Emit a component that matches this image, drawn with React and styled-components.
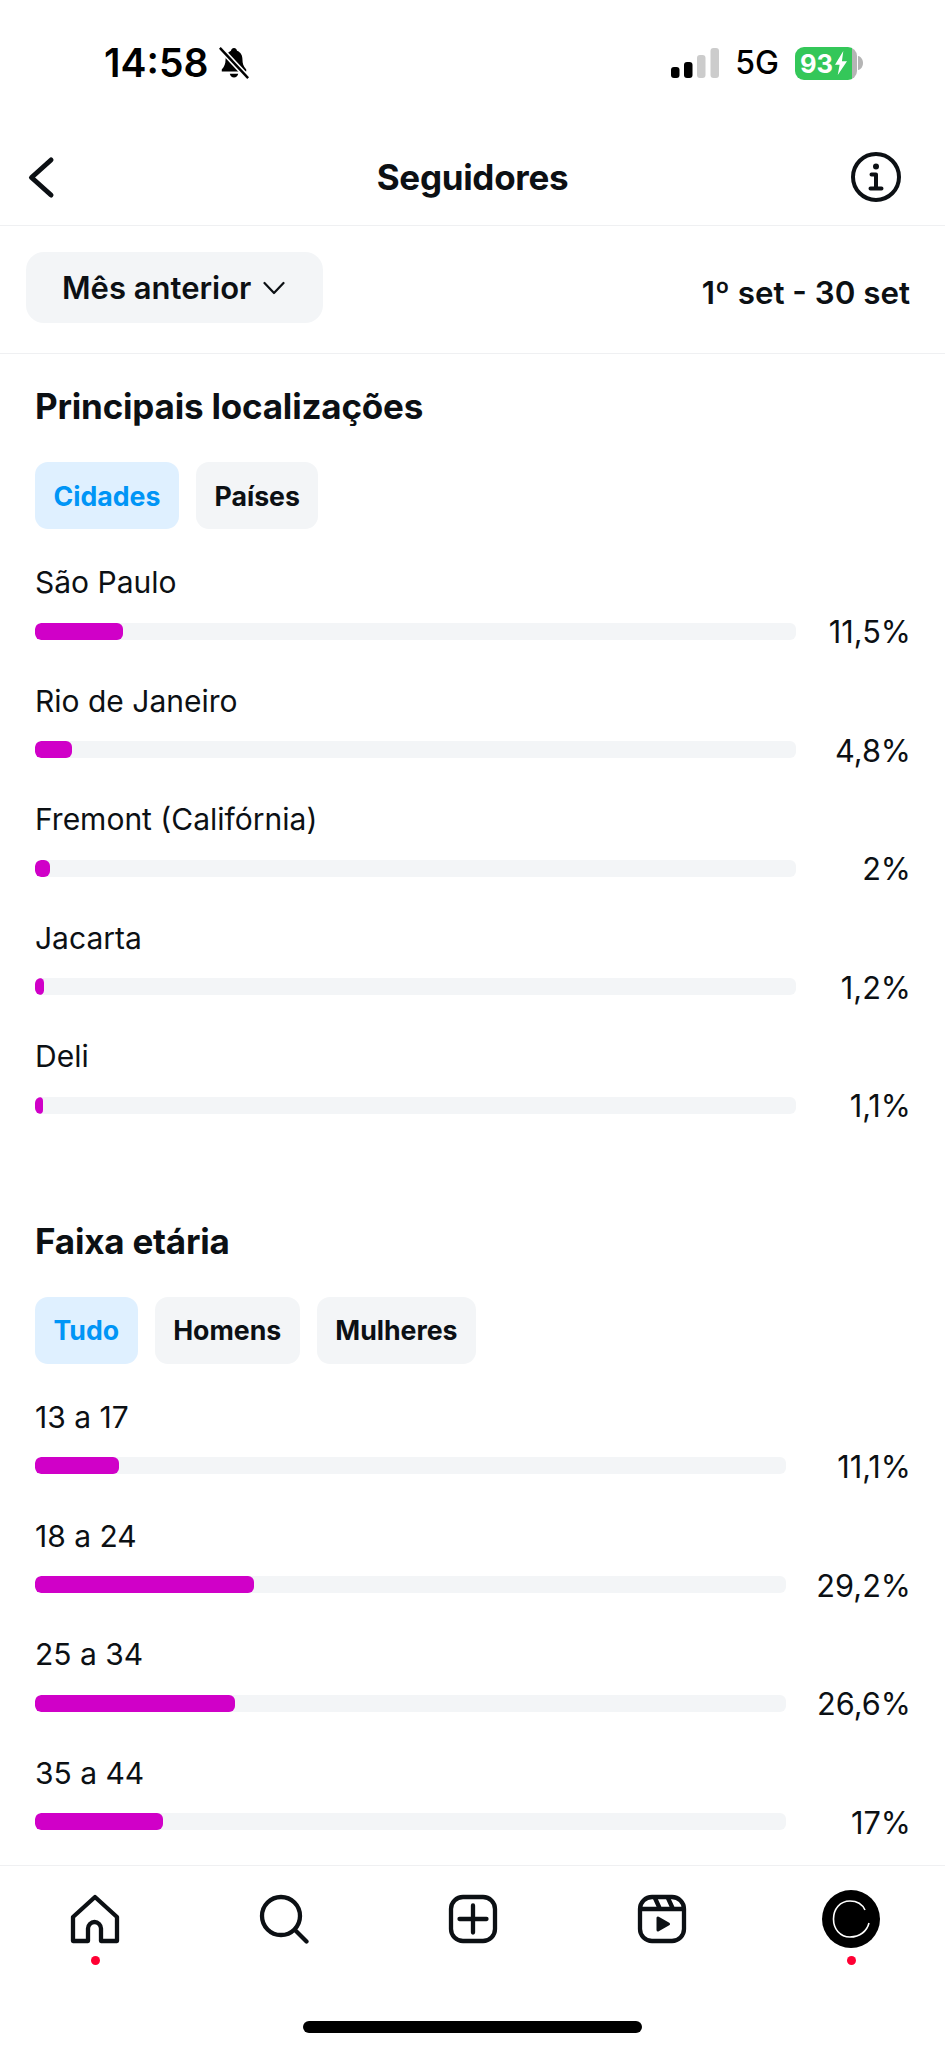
import React from "react";
import styled, { createGlobalStyle } from "styled-components";

const Global = createGlobalStyle`
  html, body { margin: 0; padding: 0; background: #fff; }
  body { font-family: Inter, "Liberation Sans", sans-serif; color: #0c1014; }
`;

const Screen = styled.div`
  width: 945px;
  height: 2048px;
  display: flex;
  flex-direction: column;
  overflow: hidden;
  background: #fff;
`;

const StatusBar = styled.div`
  height: 126px;
  flex: none;
  box-sizing: border-box;
  padding: 0 81px 0 104px;
  display: flex;
  justify-content: space-between;
  align-items: center;
`;

const TimeGroup = styled.div`
  display: flex;
  align-items: center;
  gap: 10px;
`;

const Time = styled.span`
  font-size: 39px;
  font-weight: 600;
  line-height: 44px;
  color: #000;
`;

const StatusRight = styled.div`
  display: flex;
  align-items: center;
`;

const Network = styled.span`
  font-size: 32px;
  font-weight: 500;
  line-height: 38px;
  margin: 0 16px 0 16px;
  color: #000;
`;

const Battery = styled.div`
  width: 62px;
  height: 33px;
  border-radius: 9px;
  background: linear-gradient(90deg, #34c759 0 92%, #b5b5b5 92%);
  display: flex;
  align-items: center;
  padding-left: 5px;
  gap: 2px;
  box-sizing: border-box;
  color: #fff;
  font-size: 25.5px;
  font-weight: 700;
`;

const NavBar = styled.header`
  height: 100px;
  flex: none;
  box-sizing: border-box;
  border-bottom: 1px solid #eff0f2;
  padding: 2px 44px 0 24px;
  display: grid;
  grid-template-columns: 1fr auto 1fr;
  align-items: center;
`;

const NavEnd = styled.div`
  display: flex;
  justify-content: ${(p) => (p.$right ? "flex-end" : "flex-start")};
`;

const Title = styled.h1`
  margin: 0 0 0 20px;
  font-size: 35px;
  font-weight: 700;
  line-height: 40px;
  letter-spacing: -0.3px;
`;

const FilterBar = styled.div`
  height: 128px;
  flex: none;
  box-sizing: border-box;
  border-bottom: 1px solid #eff0f2;
  padding: 26px 35px 0 26px;
  display: flex;
  justify-content: space-between;
  align-items: flex-start;
`;

const SelectButton = styled.div`
  height: 71px;
  width: 297px;
  box-sizing: border-box;
  border-radius: 18px;
  background: #f3f5f7;
  padding-left: 36px;
  display: flex;
  align-items: center;
  gap: 12px;
  font-size: 31px;
  font-weight: 600;
`;

const DateRange = styled.span`
  font-size: 31.3px;
  font-weight: 600;
  line-height: 36px;
  margin-top: 23px;
`;

const Content = styled.main`
  flex: 1;
  min-height: 0;
  overflow: hidden;
  padding: 0 34px 0 35px;
`;

const Section = styled.section`
  padding-top: ${(p) => p.$top}px;
`;

const SectionTitle = styled.h2`
  margin: 0;
  font-size: 35px;
  font-weight: 700;
  line-height: 42px;
  letter-spacing: -0.2px;
`;

const ChipRow = styled.div`
  display: flex;
  gap: 17px;
  margin-top: 35px;
`;

const Chip = styled.div`
  height: 67px;
  box-sizing: border-box;
  padding: 0 18.5px;
  border-radius: 13px;
  display: flex;
  align-items: center;
  font-size: 26.7px;
  font-weight: 700;
  background: ${(p) => (p.$active ? "#dff0ff" : "#f3f5f7")};
  color: ${(p) => (p.$active ? "#0095f6" : "#0c1014")};
`;

const RowList = styled.div`
  margin-top: 35px;
`;

const Row = styled.div`
  height: 118.6px;
`;

const RowLabel = styled.div`
  font-size: 30px;
  font-weight: 400;
  line-height: 36px;
`;

const RowBody = styled.div`
  display: flex;
  align-items: center;
  justify-content: space-between;
  margin-top: 12px;
`;

const Track = styled.div`
  width: ${(p) => p.$width}px;
  height: 17px;
  border-radius: 6px;
  background: #f3f5f7;
  overflow: hidden;
`;

const Fill = styled.div`
  height: 100%;
  border-radius: 6px;
  background: #d000c8;
`;

const Percent = styled.span`
  font-size: 30.7px;
  font-weight: 400;
  line-height: 36px;
  margin-top: 2px;
`;

const TabBar = styled.nav`
  height: 183px;
  flex: none;
  box-sizing: border-box;
  border-top: 1px solid #eff0f2;
  position: relative;
  display: flex;
  padding: 28px 29px 0 30px;
  justify-content: space-between;
  background: #fff;
`;

const Tab = styled.div`
  width: 130px;
  height: 70px;
  position: relative;
  display: flex;
  justify-content: center;
  align-items: flex-start;
`;

const Dot = styled.span`
  position: absolute;
  left: 50%;
  top: 62px;
  width: 9px;
  height: 9px;
  margin-left: -4.5px;
  border-radius: 50%;
  background: #ff0033;
`;

const HomeIndicator = styled.div`
  position: absolute;
  left: 303px;
  bottom: 15px;
  width: 339px;
  height: 12px;
  border-radius: 6px;
  background: #000;
`;

const BellOff = () => (
  <svg width="32" height="34" viewBox="0 0 34 34" fill="none">
    <path d="M17 1c2 0 3 1.500 3.200 3 4 1.500 5.800 5 5.800 9.500 0 4 .8 6.500 4 10.500v2H4v-2c3-3.500 4-6.500 4-10.500C8 9 10 5.500 13.800 4 14 2.500 15 1 17 1z" fill="#000" />
    <path d="M12.500 28.500h9c-.5 2.500-2.300 4-4.500 4s-4-1.500-4.500-4z" fill="#000" />
    <path d="M2 1l30 32" stroke="#fff" strokeWidth="6" />
    <path d="M2 1l30 32" stroke="#000" strokeWidth="2.600" />
  </svg>
);

const Signal = () => (
  <svg width="48" height="30" viewBox="0 0 48 30">
    <rect x="0" y="19" width="8.500" height="11" rx="3" fill="#000" />
    <rect x="13" y="14" width="8.500" height="16" rx="3" fill="#000" />
    <rect x="26" y="7" width="8.500" height="23" rx="3" fill="#ccc" />
    <rect x="39.500" y="0" width="8.500" height="30" rx="3" fill="#ccc" />
  </svg>
);

const Bolt = () => (
  <svg width="12" height="24" viewBox="0 0 13 26" fill="#fff" style={{ flex: "none" }}>
    <path d="M9 0L0 15h5l-2 11 10-15H7.500z" />
  </svg>
);

const BatteryCap = () => (
  <svg width="6" height="14" viewBox="0 0 6 14" style={{ marginLeft: 1 }}>
    <path d="M0 0c3 .5 5 3.500 5 7s-2 6.500-5 7z" fill="#b5b5b5" />
  </svg>
);

const Back = () => (
  <svg width="34" height="48" viewBox="0 0 34 48" fill="none">
    <path d="M27 7L7.500 24.500 27 42" stroke="#0c1014" strokeWidth="5" strokeLinecap="round" strokeLinejoin="round" />
  </svg>
);

const Info = () => (
  <svg width="50" height="50" viewBox="0 0 50 50" fill="none">
    <circle cx="25" cy="25" r="23" stroke="#0c1014" strokeWidth="4" />
    <circle cx="25" cy="14.500" r="3" fill="#0c1014" />
    <path d="M20.500 22.500H25V36.500M19.500 36.500H30.500" stroke="#0c1014" strokeWidth="4" strokeLinecap="round" strokeLinejoin="round" />
  </svg>
);

const Chevron = () => (
  <svg width="22" height="14" viewBox="0 0 22 14" fill="none">
    <path d="M1.500 2L11 12l9.500-10" stroke="#0c1014" strokeWidth="2.200" strokeLinecap="round" strokeLinejoin="round" />
  </svg>
);

const HomeIcon = () => (
  <svg width="50" height="50" viewBox="0 0 50 50" fill="none">
    <path d="M25 3L3 23V47H18V34.500a6.500 6.500 0 0 1 13 0V47H47V23z" stroke="#0c1014" strokeWidth="4.300" strokeLinejoin="round" />
  </svg>
);

const SearchIcon = () => (
  <svg width="50" height="50" viewBox="0 0 50 50" fill="none">
    <circle cx="22" cy="22" r="19" stroke="#0c1014" strokeWidth="4.300" />
    <path d="M36 36L47.500 47.500" stroke="#0c1014" strokeWidth="4.300" strokeLinecap="round" />
  </svg>
);

const AddIcon = () => (
  <svg width="50" height="50" viewBox="0 0 50 50" fill="none">
    <rect x="3" y="3" width="44" height="44" rx="12" stroke="#0c1014" strokeWidth="4.300" />
    <path d="M25 11.500v27M11.500 25h27" stroke="#0c1014" strokeWidth="4.300" strokeLinecap="round" />
  </svg>
);

const ReelsIcon = () => (
  <svg width="50" height="50" viewBox="0 0 50 50" fill="none">
    <rect x="3" y="3" width="44" height="44" rx="12" stroke="#0c1014" strokeWidth="4.300" />
    <path d="M3 15h44M17.500 3l5.500 12M30.500 3l5.500 12" stroke="#0c1014" strokeWidth="4.300" />
    <path d="M21 24V36L31.500 30z" fill="#0c1014" stroke="#0c1014" strokeWidth="3" strokeLinejoin="round" />
  </svg>
);

const Avatar = () => (
  <svg width="58" height="58" viewBox="0 0 58 58" style={{ marginTop: -4 }}>
    <circle cx="29" cy="29" r="29" fill="#000" />
    <path d="M43 20C40 13.500 34 11 28 11C18 11 11.500 19 11.500 29C11.500 39 18 47 28 47C38 47 45 41 47 33" fill="none" stroke="#fff" strokeWidth="1.600" />
  </svg>
);

const cities = [
  ["São Paulo", "11,5%", 88],
  ["Rio de Janeiro", "4,8%", 37],
  ["Fremont (Califórnia)", "2%", 15],
  ["Jacarta", "1,2%", 9],
  ["Deli", "1,1%", 8],
];

const ages = [
  ["13 a 17", "11,1%", 84],
  ["18 a 24", "29,2%", 219],
  ["25 a 34", "26,6%", 200],
  ["35 a 44", "17%", 128],
];

const BarRows = ({ rows, width }) => (
  <RowList>
    {rows.map(([label, pct, w]) => (
      <Row key={label}>
        <RowLabel>{label}</RowLabel>
        <RowBody>
          <Track $width={width}>
            <Fill style={{ width: w }} />
          </Track>
          <Percent>{pct}</Percent>
        </RowBody>
      </Row>
    ))}
  </RowList>
);

export default function App() {
  return (
    <Screen>
      <Global />
      <StatusBar>
        <TimeGroup>
          <Time>14:58</Time>
          <BellOff />
        </TimeGroup>
        <StatusRight>
          <Signal />
          <Network>5G</Network>
          <Battery>
            93
            <Bolt />
          </Battery>
          <BatteryCap />
        </StatusRight>
      </StatusBar>
      <NavBar>
        <NavEnd><Back /></NavEnd>
        <Title>Seguidores</Title>
        <NavEnd $right><Info /></NavEnd>
      </NavBar>
      <FilterBar>
        <SelectButton>
          Mês anterior
          <Chevron />
        </SelectButton>
        <DateRange>1º set - 30 set</DateRange>
      </FilterBar>
      <Content>
        <Section $top={31}>
          <SectionTitle>Principais localizações</SectionTitle>
          <ChipRow>
            <Chip $active>Cidades</Chip>
            <Chip>Países</Chip>
          </ChipRow>
          <BarRows rows={cities} width={761} />
        </Section>
        <Section $top={63}>
          <SectionTitle>Faixa etária</SectionTitle>
          <ChipRow>
            <Chip $active>Tudo</Chip>
            <Chip>Homens</Chip>
            <Chip>Mulheres</Chip>
          </ChipRow>
          <BarRows rows={ages} width={751} />
        </Section>
      </Content>
      <TabBar>
        <Tab><HomeIcon /><Dot /></Tab>
        <Tab><SearchIcon /></Tab>
        <Tab><AddIcon /></Tab>
        <Tab><ReelsIcon /></Tab>
        <Tab><Avatar /><Dot /></Tab>
        <HomeIndicator />
      </TabBar>
    </Screen>
  );
}
